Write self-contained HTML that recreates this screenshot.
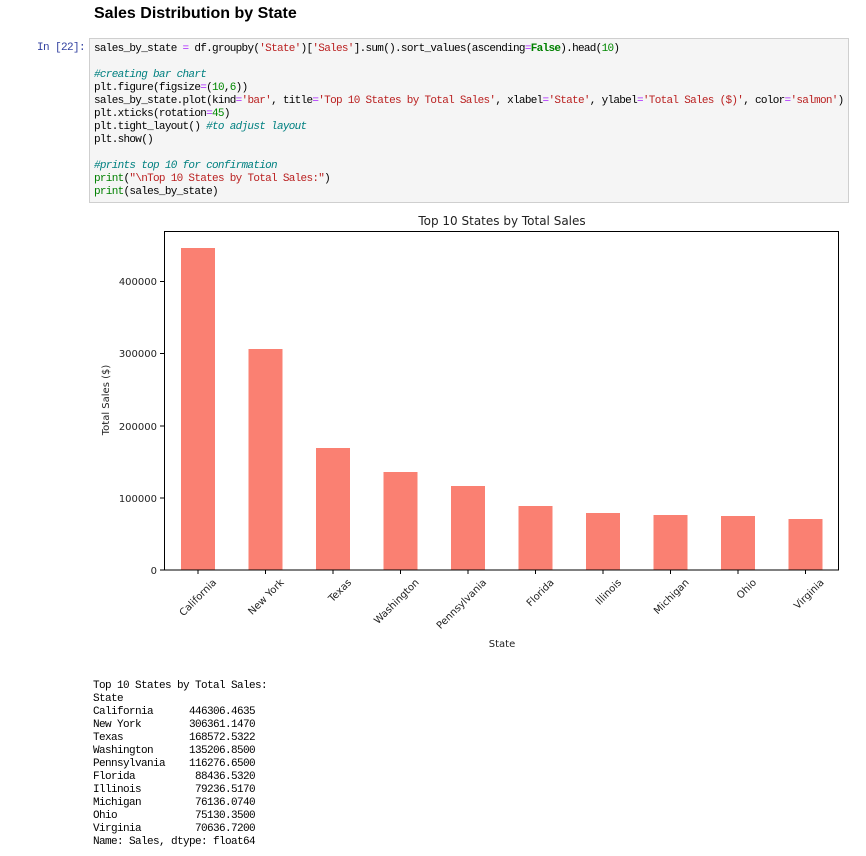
<!DOCTYPE html>
<html><head><meta charset="utf-8"><style>
body{margin:0;background:#fff;width:866px;height:856px;overflow:hidden;position:relative;font-family:"Liberation Sans",sans-serif}
h2{position:absolute;left:94px;top:5px;margin:0;font-size:16px;font-weight:bold;color:#000}
.prompt{position:absolute;left:37px;top:42px;font:11px "Liberation Mono",monospace;color:#303f9f;letter-spacing:-0.6px}
.cell{position:absolute;left:89px;top:38px;width:758px;height:163px;background:#f5f5f5;border:1px solid #cfcfcf}
pre{margin:0;font:11px/13px "Liberation Mono",monospace;letter-spacing:-0.7px;color:#000}
.cell pre{position:absolute;left:4px;top:4px}
.c{color:#008080;font-style:italic}.s{color:#ba2121}.n{color:#080}.k{color:#008000;font-weight:bold}.o{color:#aa22ff}
.out{position:absolute;left:93px;top:680px}
.out pre{letter-spacing:-0.6px;line-height:13px}
</style></head><body>
<h2>Sales Distribution by State</h2>
<div class="prompt">In [22]:</div>
<div class="cell"><pre>sales_by_state <span class="o">=</span> df.groupby(<span class="s">'State'</span>)[<span class="s">'Sales'</span>].sum().sort_values(ascending<span class="o">=</span><span class="k">False</span>).head(<span class="n">10</span>)

<span class="c">#creating bar chart</span>
plt.figure(figsize<span class="o">=</span>(<span class="n">10</span>,<span class="n">6</span>))
sales_by_state.plot(kind<span class="o">=</span><span class="s">'bar'</span>, title<span class="o">=</span><span class="s">'Top 10 States by Total Sales'</span>, xlabel<span class="o">=</span><span class="s">'State'</span>, ylabel<span class="o">=</span><span class="s">'Total Sales ($)'</span>, color<span class="o">=</span><span class="s">'salmon'</span>)
plt.xticks(rotation<span class="o">=</span><span class="n">45</span>)
plt.tight_layout() <span class="c">#to adjust layout</span>
plt.show()

<span class="c">#prints top 10 for confirmation</span>
<span class="k" style="font-weight:normal">print</span>(<span class="s">"\nTop 10 States by Total Sales:"</span>)
<span class="k" style="font-weight:normal">print</span>(sales_by_state)</pre></div>

<svg style="position:absolute;left:0;top:0" width="866" height="670" font-family="DejaVu Sans, sans-serif" font-size="10" fill="#222">
<text x="502" y="225" text-anchor="middle" font-size="12">Top 10 States by Total Sales</text>
<g fill="salmon">
<rect x="181" y="248" width="34" height="322"/>
<rect x="248.5" y="349" width="34" height="221"/>
<rect x="316" y="448" width="34" height="122"/>
<rect x="383.5" y="472" width="34" height="98"/>
<rect x="451" y="486" width="34" height="84"/>
<rect x="518.5" y="506" width="34" height="64"/>
<rect x="586" y="513" width="34" height="57"/>
<rect x="653.5" y="515" width="34" height="55"/>
<rect x="721" y="516" width="34" height="54"/>
<rect x="788.5" y="519" width="34" height="51"/>
</g>
<rect x="164.5" y="231.5" width="674" height="338.5" fill="none" stroke="#000" stroke-width="1"/>
<g stroke="#000">
<line x1="160" x2="164" y1="570" y2="570"/><line x1="160" x2="164" y1="498" y2="498"/><line x1="160" x2="164" y1="426" y2="426"/><line x1="160" x2="164" y1="353.5" y2="353.5"/><line x1="160" x2="164" y1="281.5" y2="281.5"/>
</g>
<g text-anchor="end">
<text x="157" y="574">0</text><text x="157" y="502">100000</text><text x="157" y="430">200000</text><text x="157" y="357">300000</text><text x="157" y="285">400000</text>
</g>
<text transform="translate(109,400) rotate(-90)" text-anchor="middle">Total Sales ($)</text>
<g stroke="#000">
<line x1="198" x2="198" y1="570" y2="574"/><line x1="265.5" x2="265.5" y1="570" y2="574"/><line x1="333" x2="333" y1="570" y2="574"/><line x1="400.5" x2="400.5" y1="570" y2="574"/><line x1="468" x2="468" y1="570" y2="574"/><line x1="535.5" x2="535.5" y1="570" y2="574"/><line x1="603" x2="603" y1="570" y2="574"/><line x1="670.5" x2="670.5" y1="570" y2="574"/><line x1="738" x2="738" y1="570" y2="574"/><line x1="805.5" x2="805.5" y1="570" y2="574"/>
</g>
<g text-anchor="end">
<text transform="translate(217,583) rotate(-45)">California</text>
<text transform="translate(284.5,583) rotate(-45)">New York</text>
<text transform="translate(352,583) rotate(-45)">Texas</text>
<text transform="translate(419.5,583) rotate(-45)">Washington</text>
<text transform="translate(487,583) rotate(-45)">Pennsylvania</text>
<text transform="translate(554.5,583) rotate(-45)">Florida</text>
<text transform="translate(622,583) rotate(-45)">Illinois</text>
<text transform="translate(689.5,583) rotate(-45)">Michigan</text>
<text transform="translate(757,583) rotate(-45)">Ohio</text>
<text transform="translate(824.5,583) rotate(-45)">Virginia</text>
</g>
<text x="502" y="647" text-anchor="middle">State</text>
</svg>

<div class="out"><pre>Top 10 States by Total Sales:
State
California      446306.4635
New York        306361.1470
Texas           168572.5322
Washington      135206.8500
Pennsylvania    116276.6500
Florida          88436.5320
Illinois         79236.5170
Michigan         76136.0740
Ohio             75130.3500
Virginia         70636.7200
Name: Sales, dtype: float64</pre></div>
</body></html>
